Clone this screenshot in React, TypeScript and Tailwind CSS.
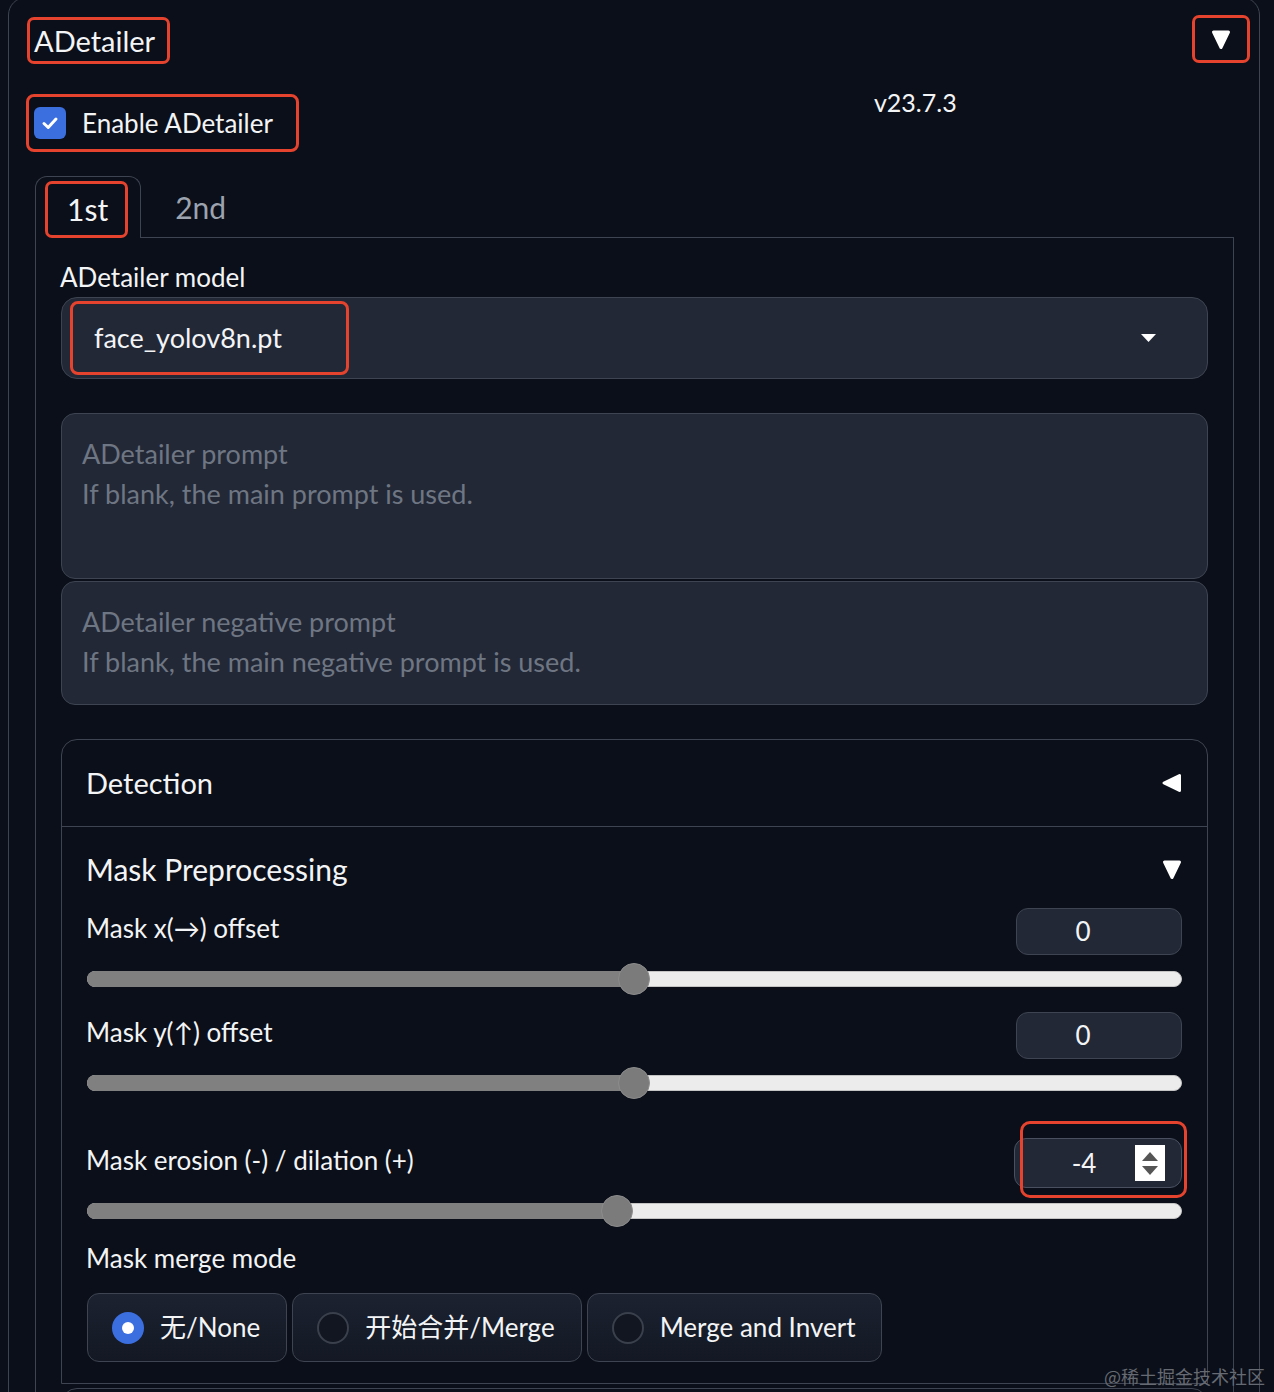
import React from "react";

function TriDown({ w = 20, h = 21 }: { w?: number; h?: number }) {
  return (
    <svg width={w} height={h} viewBox="0 0 20 21">
      <path d="M2.5 3 L17.5 3 L10 18.5 Z" fill="#ffffff" stroke="#ffffff" strokeWidth="3" strokeLinejoin="round" />
    </svg>
  );
}

function TriLeft() {
  return (
    <svg width={21} height={20} viewBox="0 0 21 20">
      <path d="M18.5 2.5 L18.5 17.5 L3 10 Z" fill="#ffffff" stroke="#ffffff" strokeWidth="3" strokeLinejoin="round" />
    </svg>
  );
}

function Slider({ frac }: { frac: number }) {
  const cx = 16 + frac * (1094 - 32);
  return (
    <div className="relative h-[32px] w-full">
      <div className="absolute left-0 right-0 top-[8px] h-[16px] rounded-full bg-[#ececec] border border-[#c4c4c4]" />
      <div className="absolute left-0 top-[8px] h-[16px] rounded-l-full bg-[#808080]" style={{ width: cx }} />
      <div className="absolute top-0 h-[32px] w-[32px] rounded-full bg-[#7b7b7b] border border-[#8c8c8c]" style={{ left: cx - 16 }} />
    </div>
  );
}

function NumBox({ value }: { value: string }) {
  return (
    <div className="w-[166px] h-[47px] rounded-[12px] bg-[#222836] border border-[#3e4451] flex items-center justify-center pr-[32px] text-[26px] text-[#f3f4f6]">
      {value}
    </div>
  );
}

function Radio({ label, checked }: { label: string; checked?: boolean }) {
  return (
    <div className="h-[69px] rounded-[12px] border border-[#3e4451] bg-gradient-to-b from-[#1c2230] to-[#131824] flex items-center pl-[24px] pr-[26px] gap-[16px] text-[26px] text-[#f3f4f6]">
      {checked ? (
        <div className="w-[32px] h-[32px] rounded-full bg-[#3b6fe0] flex items-center justify-center">
          <div className="w-[12px] h-[12px] rounded-full bg-white" />
        </div>
      ) : (
        <div className="w-[32px] h-[32px] rounded-full border-2 border-[#3a404c] bg-[#111621]" />
      )}
      <span>{label}</span>
    </div>
  );
}

export default function App() {
  return (
    <div className="relative h-[1392px] overflow-hidden bg-[#0b0f19] text-[#f3f4f6] font-['Lato','Noto_Sans_CJK_SC',sans-serif]">
      <div className="ml-[8px] w-[1252px] -mt-[3px] border border-[#3e4451] rounded-t-[18px] pt-[17px] pl-[17px] pr-[9px] h-[1420px]">
        {/* title row */}
        <div className="flex justify-between items-start">
          <div className="mt-[2px] ml-[1px] border-[3px] border-[#e5432d] rounded-[7px] pl-[4px] pr-[12px] h-[47px] flex items-center text-[29px] leading-none">
            ADetailer
          </div>
          <div className="w-[58px] h-[48px] border-[3px] border-[#e5432d] rounded-[7px] flex items-center justify-center">
            <TriDown />
          </div>
        </div>

        {/* checkbox row */}
        <div className="mt-[30px] flex items-start">
          <div className="h-[58px] border-[3px] border-[#e5432d] rounded-[8px] flex items-center pl-[5px] pr-[23px] gap-[16px]">
            <div className="w-[32px] h-[32px] rounded-[6px] bg-[#3b6fe0] flex items-center justify-center">
              <svg width="20" height="20" viewBox="0 0 20 20">
                <path d="M4 10.5 L8.2 14.5 L16 6" fill="none" stroke="#ffffff" strokeWidth="3" strokeLinecap="round" strokeLinejoin="round" />
              </svg>
            </div>
            <span className="text-[26px] leading-none">Enable ADetailer</span>
          </div>
          <div className="ml-[575px] -mt-[7px] text-[25px] leading-[30px]">v23.7.3</div>
        </div>

        {/* tabs */}
        <div className="mt-[24px] ml-[9px] mr-[16px]">
          <div className="flex items-end relative z-10">
            <div className="h-[62px] -mb-px border border-b-0 border-[#3e4451] rounded-t-[12px] bg-[#0b0f19] pl-[9px] pr-[12px] pt-[4px]">
              <div className="h-[57px] border-[3px] border-[#e5432d] rounded-[7px] pl-[19px] pr-[17px] flex items-center text-[30px]">
                1st
              </div>
            </div>
            <div className="h-[61px] flex items-center pl-[34px] pt-[2px] text-[30px] text-[#9ca3af]">2nd</div>
          </div>

          <div className="border border-[#3e4451] pl-[25px] pr-[25px] pt-[23px] h-[1200px]">
            <div className="text-[26px] leading-[32px] -ml-px">ADetailer model</div>
            <div className="mt-[4px] h-[82px] rounded-[16px] bg-[#222836] border border-[#3e4451] flex items-center justify-between pl-[8px] pr-[51px]">
              <div className="h-[74px] border-[3px] border-[#e5432d] rounded-[8px] pl-[21px] pr-[64px] flex items-center text-[27px]">
                face_yolov8n.pt
              </div>
              <svg width="15" height="8" viewBox="0 0 15 8">
                <path d="M0 0 L15 0 L7.5 8 Z" fill="#ffffff" />
              </svg>
            </div>

            <div className="mt-[34px] h-[166px] rounded-[14px] bg-[#222836] border border-[#3e4451] px-[20px] pt-[20px] text-[27px] leading-[40px] text-[#6f7683]">
              <div>ADetailer prompt</div>
              <div>If blank, the main prompt is used.</div>
            </div>
            <div className="mt-[2px] h-[124px] rounded-[14px] bg-[#222836] border border-[#3e4451] px-[20px] pt-[20px] text-[27px] leading-[40px] text-[#6f7683]">
              <div>ADetailer negative prompt</div>
              <div>If blank, the main negative prompt is used.</div>
            </div>

            {/* Detection accordion */}
            <div className="mt-[34px] border border-[#3e4451] rounded-t-[16px]">
              <div className="h-[87px] flex items-center justify-between pl-[24px] pr-[25px] border-b border-[#3e4451] text-[29px]">
                <span>Detection</span>
                <TriLeft />
              </div>
              <div className="px-[25px] pt-[22px] pb-[21px]">
                <div className="h-[40px] flex items-center justify-between text-[30px] -ml-px">
                  <span>Mask Preprocessing</span>
                  <TriDown />
                </div>

                <div className="mt-[19px] flex justify-between items-start">
                  <span className="text-[26px] leading-[40px] -ml-px">Mask x(→) offset</span>
                  <NumBox value="0" />
                </div>
                <div className="mt-[8px]">
                  <Slider frac={0.5} />
                </div>

                <div className="mt-[17px] flex justify-between items-start">
                  <span className="text-[26px] leading-[40px] -ml-px">Mask y(↑) offset</span>
                  <NumBox value="0" />
                </div>
                <div className="mt-[8px]">
                  <Slider frac={0.5} />
                </div>

                <div className="mt-[39px] flex justify-between items-start">
                  <span className="text-[26px] leading-[44px] -ml-px">Mask erosion (-) / dilation (+)</span>
                  <div className="relative w-[168px] h-[50px] rounded-[12px] bg-[#222836] border border-[#4a5060] flex items-center pl-[18px] pr-[16px]">
                    <span className="flex-1 text-center text-[26px]">-4</span>
                    <div className="w-[30px] h-[36px] bg-white flex flex-col items-center justify-center gap-[5px]">
                      <svg width="16" height="9" viewBox="0 0 16 9"><path d="M0 9 L8 0 L16 9 Z" fill="#555555" /></svg>
                      <svg width="16" height="9" viewBox="0 0 16 9"><path d="M0 0 L16 0 L8 9 Z" fill="#555555" /></svg>
                    </div>
                    <div className="absolute -top-[18px] left-[5px] -right-[6px] -bottom-[11px] border-[3px] border-[#e5432d] rounded-[10px]" />
                  </div>
                </div>
                <div className="mt-[7px]">
                  <Slider frac={124 / 256} />
                </div>

                <div className="mt-[11px] text-[26px] leading-[40px] -ml-px">Mask merge mode</div>
                <div className="mt-[15px] flex gap-[5px]">
                  <Radio label="无/None" checked />
                  <Radio label="开始合并/Merge" />
                  <Radio label="Merge and Invert" />
                </div>
              </div>
            </div>
            <div className="mt-[4px] h-[40px] border border-[#3e4451] rounded-t-[16px]" />
          </div>
        </div>
      </div>

      <div className="absolute right-[9px] bottom-[7px] text-[18px] leading-none text-[#666a72] font-['Noto_Sans_CJK_SC',serif]">
        @稀土掘金技术社区
      </div>
    </div>
  );
}
